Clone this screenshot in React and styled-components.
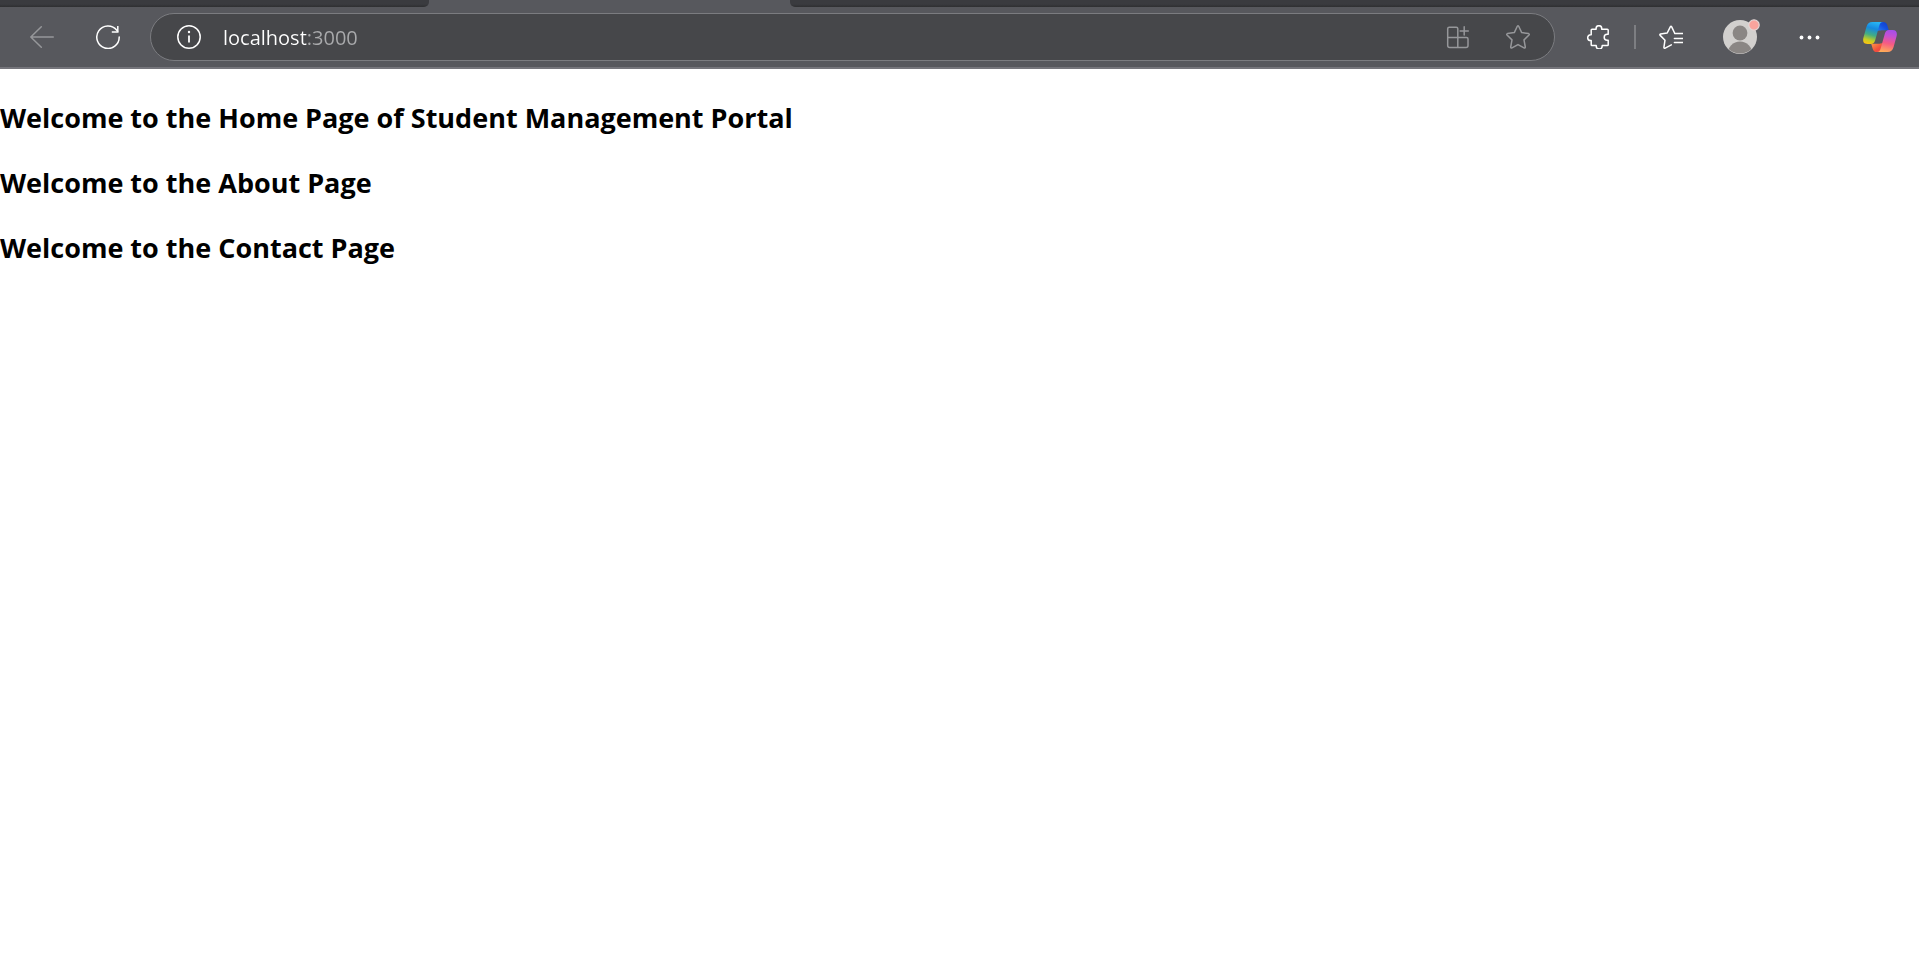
import React, { useState } from "react";
import styled, { createGlobalStyle } from "styled-components";

const GlobalStyle = createGlobalStyle`
  * { box-sizing: border-box; }
  body {
    margin: 0;
    background: #fff;
    color: #000;
    font-family: "Segoe UI", "Open Sans", "Noto Sans", sans-serif;
  }
`;

const Chrome = styled.header`
  background: #57585d;
  border-bottom: 2px solid #75757b;
`;

const TabStrip = styled.div`
  display: grid;
  grid-template-columns: 429fr 361fr 1129fr;
  height: 7px;
`;

const TabGap = styled.div`
  background: linear-gradient(#3a3b3f 60%, #2e2f31);
  border-radius: ${(p) => (p.$side === "left" ? "0 0 5px 0" : "0 0 0 5px")};
`;

const Toolbar = styled.div`
  display: flex;
  align-items: center;
  height: 60px;
  padding: 0 22px 0 30px;
`;

const Group = styled.div`
  display: flex;
  align-items: center;
  gap: ${(p) => p.$gap}px;
`;

const IconButton = styled.button`
  display: flex;
  flex: none;
  padding: 0;
  border: 0;
  background: none;
  color: ${(p) => (p.$muted ? "#96979a" : "#fff")};
  cursor: pointer;
`;

const AddressBar = styled.form`
  display: flex;
  flex: 1;
  align-items: center;
  height: 48px;
  margin: 0 32px 0 30px;
  padding: 0 24px 0 26px;
  border: 1px solid #7b7c80;
  border-radius: 24px;
  background: #46474a;
`;

const AddressInput = styled.input`
  flex: 1;
  min-width: 0;
  height: 32px;
  margin: 0 24px 0 22px;
  padding: 0;
  border: 0;
  outline: 0;
  background: linear-gradient(90deg, #fff 84px, #a9aaac 84px);
  background-clip: text;
  -webkit-text-fill-color: transparent;
  font-family: inherit;
  font-size: 20px;
`;

const Divider = styled.span`
  width: 2px;
  height: 24px;
  background: #7d7e82;
`;

const Page = styled.main`
  padding-top: 30px;
`;

const Heading = styled.h2`
  margin: 0 0 28px;
  font-size: 27px;
  line-height: 37px;
  font-weight: 700;
`;

const Line = ({ w = 24, h = 24, children }) => (
  <svg
    width={w}
    height={h}
    viewBox={`0 0 ${w} ${h}`}
    fill="none"
    stroke="currentColor"
    strokeWidth="1.5"
    strokeLinecap="round"
    strokeLinejoin="round"
    aria-hidden="true"
  >
    {children}
  </svg>
);

const BackIcon = () => (
  <Line><path d="M23.3 12H.8M11.3 1.8.8 12l10.5 10.2" /></Line>
);

const ReloadIcon = () => (
  <Line>
    <path d="M23.2 12A11.2 11.2 0 1 1 20.8 5.3L21.6 6.3" />
    <path d="M21.8 1v6h-6" strokeLinecap="butt" strokeLinejoin="miter" />
  </Line>
);

const InfoIcon = () => (
  <Line>
    <circle cx="12" cy="12" r="11.2" />
    <path d="M12 10.5V17.5" strokeLinecap="butt" strokeWidth="1.8" />
    <circle cx="12" cy="7" r="1.2" fill="currentColor" stroke="none" />
  </Line>
);

const AppsIcon = () => (
  <Line>
    <path d="M11.8 12.5V3.8Q11.8 2.3 10.3 2.3H3.2Q1.7 2.3 1.7 3.8V20.6Q1.7 22.6 3.7 22.6H20Q22 22.6 22 20.6V14Q22 12.5 20.5 12.5H1.7M11.8 12.5V22.6M18.2 1.8V10M14.1 5.9H22.3" />
  </Line>
);

const StarIcon = () => (
  <Line>
    <path d="M11.3 1.3Q12 .2 12.7 1.3L15.7 7.6 22.6 8.6Q23.8 9 23 10L18 14.9 19.3 22Q19.3 23.4 18 22.9L12 19.6 6 22.9Q4.7 23.4 4.7 22L6 14.9 1 10Q.2 9 1.4 8.6L8.3 7.6Z" />
  </Line>
);

const PuzzleIcon = () => (
  <Line>
    <path d="M4.2 8.4V5Q4.2 4.2 5 4.2H9.1V3.5A2.8 2.8 0 0 1 14.7 3.5V4.2H20.2Q21.2 4.2 21.2 5.2V9.2H20.2A3 3 0 0 0 20.2 15.2H21.2V19.8Q21.2 20.6 20.4 20.6H15.2V21A3 3 0 0 1 9.2 21V20.6H5Q4.2 20.6 4.2 19.8V15.6H3.6A2.9 2.9 0 0 1 3.6 9.8H4.2Z" />
  </Line>
);

const FavoritesIcon = () => (
  <Line>
    <path d="M15.6 8 12.7 1.9Q12 .8 11.3 1.9L8.2 8 1.5 9Q.3 9.4 1.2 10.4L6 15.2 4.9 22.3Q4.9 23.7 6.2 23.1L12.3 19.9M15.6 8.5H24M15.4 13.5H24M15.4 17.5H24" />
  </Line>
);

const AvatarIcon = () => (
  <svg width="38" height="40" viewBox="1 0 38 40" overflow="visible" aria-hidden="true">
    <defs>
      <clipPath id="avatarDisc"><circle cx="20" cy="20" r="16.5" /></clipPath>
    </defs>
    <circle cx="20" cy="20" r="17" fill="#d2d0ce" />
    <g clipPath="url(#avatarDisc)" fill="#8a8684">
      <circle cx="20" cy="16" r="7.4" />
      <circle cx="20" cy="37" r="12.4" />
    </g>
    <circle cx="34" cy="8" r="5.2" fill="#f9a49d" stroke="#e2d7d6" strokeWidth="1.2" />
  </svg>
);

const MoreIcon = () => (
  <svg width="24" height="24" viewBox="0 0 24 24" fill="currentColor" aria-hidden="true">
    <circle cx="4.5" cy="12.5" r="1.9" />
    <circle cx="12.5" cy="12.5" r="1.9" />
    <circle cx="20.5" cy="12.5" r="1.9" />
  </svg>
);

const CopilotIcon = () => (
  <svg width="38" height="30" viewBox="-4 0 38 30" aria-hidden="true">
    <defs>
      <linearGradient id="copilotLeft" x1=".6" y1="0" x2=".35" y2="1">
        <stop offset="0" stopColor="#27b5f5" />
        <stop offset=".3" stopColor="#1689df" />
        <stop offset=".6" stopColor="#43ad83" />
        <stop offset=".85" stopColor="#c8ce22" />
        <stop offset="1" stopColor="#f6c514" />
      </linearGradient>
      <linearGradient id="copilotRight" x1=".6" y1="0" x2=".4" y2="1">
        <stop offset="0" stopColor="#a64fe8" />
        <stop offset=".25" stopColor="#c450d4" />
        <stop offset=".6" stopColor="#f65b83" />
        <stop offset="1" stopColor="#ffac58" />
      </linearGradient>
      <linearGradient id="copilotTop" x1="1" y1="0" x2="0" y2="1">
        <stop offset="0" stopColor="#123bc4" />
        <stop offset=".5" stopColor="#1451df" />
        <stop offset="1" stopColor="#2780f0" />
      </linearGradient>
      <linearGradient id="copilotBottom" x1="0" y1="0" x2="1" y2="1">
        <stop offset="0" stopColor="#ff9a48" />
        <stop offset=".6" stopColor="#f1503c" />
        <stop offset="1" stopColor="#ee3a50" />
      </linearGradient>
    </defs>
    <path fill="url(#copilotTop)" d="M15 0H20C22.6 0 23.7 1.2 24.4 3.6L25.8 8.3H21.3C18.8 8.3 17.8 8.3 16.5 8.6L14 9Z" />
    <path fill="url(#copilotBottom)" d="M19 30H14C11.4 30 10.3 28.8 9.6 26.4L8.2 21.7H12.7C15.2 21.7 16.2 21.7 17.5 21.4L20 21Z" />
    <path fill="url(#copilotLeft)" d="M9.3 0H20C17.8 0 16.9 1.5 16.2 4L12.1 18.5C11.4 20.8 10.3 22 8 22H4.5C.5 22-.5 19.2.5 15.5L3.4 5C4.4 1.5 6.2 0 9.3 0Z" />
    <path fill="url(#copilotRight)" d="M24.7 30H14C16.2 30 17.1 28.5 17.8 26L21.9 11.5C22.6 9.2 23.7 8 26 8H29.5C33.5 8 34.5 10.8 33.5 14.5L30.6 25C29.6 28.5 27.8 30 24.7 30Z" />
  </svg>
);

const headings = [
  "Welcome to the Home Page of Student Management Portal",
  "Welcome to the About Page",
  "Welcome to the Contact Page",
];

export default function App() {
  const [address, setAddress] = useState("localhost:3000");

  return (
    <>
      <GlobalStyle />
      <Chrome>
        <TabStrip>
          <TabGap $side="left" />
          <span />
          <TabGap $side="right" />
        </TabStrip>
        <Toolbar>
          <Group $gap={42}>
            <IconButton $muted aria-label="Back"><BackIcon /></IconButton>
            <IconButton aria-label="Refresh"><ReloadIcon /></IconButton>
          </Group>
          <AddressBar onSubmit={(e) => e.preventDefault()}>
            <IconButton type="button" aria-label="View site information"><InfoIcon /></IconButton>
            <AddressInput
              aria-label="Address and search bar"
              spellCheck={false}
              value={address}
              onChange={(e) => setAddress(e.target.value)}
            />
            <Group $gap={36}>
              <IconButton type="button" $muted aria-label="App available"><AppsIcon /></IconButton>
              <IconButton type="button" $muted aria-label="Add to favorites"><StarIcon /></IconButton>
            </Group>
          </AddressBar>
          <Group $gap={38}>
            <Group $gap={23}>
              <IconButton aria-label="Extensions"><PuzzleIcon /></IconButton>
              <Divider />
              <IconButton aria-label="Favorites"><FavoritesIcon /></IconButton>
            </Group>
            <IconButton aria-label="Profile"><AvatarIcon /></IconButton>
            <IconButton aria-label="Settings and more"><MoreIcon /></IconButton>
            <IconButton aria-label="Copilot"><CopilotIcon /></IconButton>
          </Group>
        </Toolbar>
      </Chrome>
      <Page>
        {headings.map((text) => (
          <Heading key={text}>{text}</Heading>
        ))}
      </Page>
    </>
  );
}
